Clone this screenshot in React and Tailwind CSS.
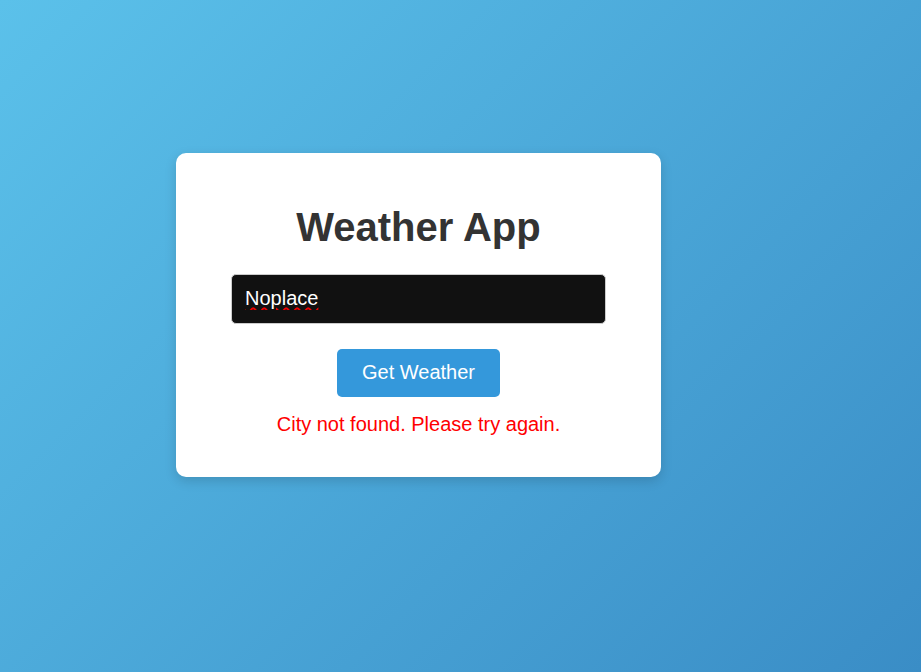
import React, { useState } from 'react';

const App = () => {
  const [city, setCity] = useState('Noplace');
  const [error] = useState('City not found. Please try again.');

  return (
    <div className="min-h-[672px] w-full bg-[linear-gradient(135deg,#5bc1ea,#3a8dc6)] font-['Liberation_Sans',Arial,sans-serif] pt-[153px] pl-[176px]">
      <div className="w-[485px] h-[324px] bg-white rounded-[10px] shadow-[0_4px_12px_rgba(0,0,0,0.15)] flex flex-col items-center">
        <h1 className="mt-[51px] text-[40px] leading-[46px] font-bold text-[#333]">Weather App</h1>

        <input
          type="text"
          value={city}
          onChange={(e) => setCity(e.target.value)}
          placeholder="Enter city name"
          className="mt-[24px] w-[375px] h-[50px] bg-[#111] text-white text-[20px] pl-[13px] pb-[2px] border border-[#ccc] rounded-[5px] outline-none underline decoration-wavy decoration-[#e00] decoration-[1.5px] underline-offset-[2px]"
        />

        <button
          type="button"
          className="mt-[25px] w-[163px] h-[48px] pb-[2px] bg-[#3498db] text-white text-[20px] rounded-[5px]"
        >
          Get Weather
        </button>

        {error && (
          <p className="mt-[16px] text-[20px] leading-[23px] text-[#f00]">{error}</p>
        )}
      </div>
    </div>
  );
};

export default App;
